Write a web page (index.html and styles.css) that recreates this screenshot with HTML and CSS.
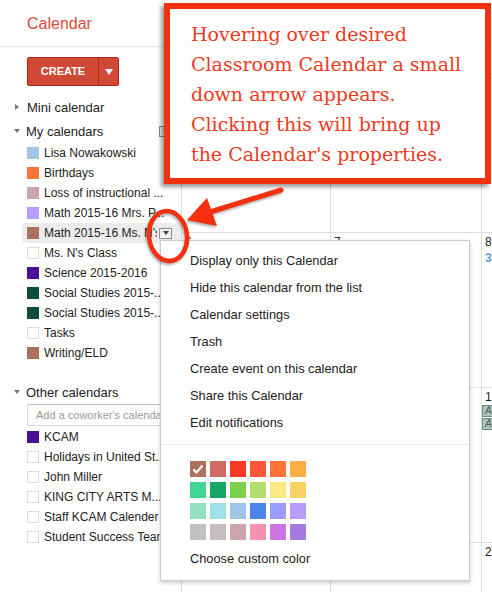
FILE: index.html
```html
<!DOCTYPE html>
<html>
<head>
  <meta charset="UTF-8">
  <title>Calendar</title>
  <link rel="stylesheet" href="styles.css">
</head>
<body>
    <div class="topbar"><span class="brand">Calendar</span></div>

    <div class="app">
        <div class="sidebar">
            <div class="create">
                <span class="create-main">CREATE</span>
                <span class="create-drop"><span class="tri-white"></span></span>
            </div>

            <div class="section"><span class="arrow-right"></span>Mini calendar</div>
            <div class="section"><span class="arrow-down"></span>My calendars<span class="menu-btn"></span></div>
            <ul class="cal-list">
                <li><span class="swatch c-blue"></span><span class="name">Lisa Nowakowski</span></li>
                <li><span class="swatch c-orange"></span><span class="name">Birthdays</span></li>
                <li><span class="swatch c-mauve"></span><span class="name">Loss of instructional ...</span></li>
                <li><span class="swatch c-lavender"></span><span class="name">Math 2015-16 Mrs. P...</span></li>
                <li class="hover"><span class="swatch c-brown"></span><span class="name">Math 2015-16 Ms. N's</span><span class="menu-btn"></span></li>
                <li><span class="swatch empty"></span><span class="name">Ms. N's Class</span></li>
                <li><span class="swatch c-purple"></span><span class="name">Science 2015-2016</span></li>
                <li><span class="swatch c-green"></span><span class="name">Social Studies 2015-...</span></li>
                <li><span class="swatch c-green"></span><span class="name">Social Studies 2015-...</span></li>
                <li><span class="swatch empty"></span><span class="name">Tasks</span></li>
                <li><span class="swatch c-brown"></span><span class="name">Writing/ELD</span></li>
            </ul>

            <div class="section other"><span class="arrow-down"></span>Other calendars</div>
            <input class="coworker" type="text" placeholder="Add a coworker's calendar">
            <ul class="cal-list other-list">
                <li><span class="swatch c-purple"></span><span class="name">KCAM</span></li>
                <li><span class="swatch empty"></span><span class="name">Holidays in United St...</span></li>
                <li><span class="swatch empty"></span><span class="name">John Miller</span></li>
                <li><span class="swatch empty"></span><span class="name">KING CITY ARTS M...</span></li>
                <li><span class="swatch empty"></span><span class="name">Staff KCAM Calender</span></li>
                <li><span class="swatch empty"></span><span class="name">Student Success Team</span></li>
            </ul>
        </div>

        <div class="main">
            <div class="dayhead"></div>
            <div class="week">
                <div class="cell"></div>
                <div class="cell"></div>
                <div class="cell"></div>
            </div>
            <div class="week">
                <div class="cell"><span class="num">6</span></div>
                <div class="cell"><span class="num">7</span></div>
                <div class="cell"><span class="num">8</span><span class="more">3</span></div>
            </div>
            <div class="week">
                <div class="cell"></div>
                <div class="cell"></div>
                <div class="cell"><span class="num">1</span>
                    <span class="chip">All day</span>
                    <span class="chip">All day</span>
                </div>
            </div>
            <div class="week">
                <div class="cell"></div>
                <div class="cell"></div>
                <div class="cell"><span class="num">2</span></div>
            </div>
        </div>
    </div>

    <!-- calendar dropdown menu -->
    <div class="popup">
        <div class="item">Display only this Calendar</div>
        <div class="item">Hide this calendar from the list</div>
        <div class="item">Calendar settings</div>
        <div class="item">Trash</div>
        <div class="item">Create event on this calendar</div>
        <div class="item">Share this Calendar</div>
        <div class="item">Edit notifications</div>
        <div class="sep"></div>
        <div class="palette">
            <span class="chosen" style="background:#ac725e">
                <svg width="16" height="16" viewBox="0 0 16 16"><path d="M3.5 8.5 L6.5 11.5 L12.5 4.5" fill="none" stroke="#fff" stroke-width="2.2"/></svg>
            </span>
            <span style="background:#d06b64"></span>
            <span style="background:#f83a22"></span>
            <span style="background:#fa573c"></span>
            <span style="background:#ff7537"></span>
            <span style="background:#ffad46"></span>
            <span style="background:#42d692"></span>
            <span style="background:#16a765"></span>
            <span style="background:#7bd148"></span>
            <span style="background:#b3dc6c"></span>
            <span style="background:#fbe983"></span>
            <span style="background:#fad165"></span>
            <span style="background:#92e1c0"></span>
            <span style="background:#9fe1e7"></span>
            <span style="background:#9fc6e7"></span>
            <span style="background:#4986e7"></span>
            <span style="background:#9a9cff"></span>
            <span style="background:#b99aff"></span>
            <span style="background:#c2c2c2"></span>
            <span style="background:#cabdbf"></span>
            <span style="background:#cca6ac"></span>
            <span style="background:#f691b2"></span>
            <span style="background:#cd74e6"></span>
            <span style="background:#a47ae2"></span>
        </div>
        <div class="item custom">Choose custom color</div>
    </div>

    <!-- annotation -->
    <div class="note">
        Hovering over desired<br>
        Classroom Calendar a small<br>
        down arrow appears.<br>
        Clicking this will bring up<br>
        the Calendar's properties.
    </div>
    <svg class="marks" width="492" height="592" viewBox="0 0 492 592">
        <ellipse cx="168" cy="236" rx="19" ry="25" transform="rotate(-8 168 236)" fill="none" stroke="#f4300f" stroke-width="4.5"/>
        <line x1="210" y1="212" x2="281" y2="190" stroke="#f4300f" stroke-width="5" stroke-linecap="round"/>
        <polygon points="187,220 207,198 217,226" fill="#f4300f"/>
    </svg>
</body>
</html>
```

FILE: styles.css
```css
* {
    box-sizing: border-box;
}

body {
    margin: 0;
    width: 492px;
    height: 592px;
    overflow: hidden;
    position: relative;
    font-family: "Liberation Sans", Arial, sans-serif;
    color: #222;
    background-color: #fff;
}

.topbar {
    height: 47px;
    border-bottom: 1px solid #e5e5e5;
    padding: 14px 0 0 27px;
}

.brand {
    color: #dd4b39;
    font-size: 16px;
    line-height: 20px;
}

.app {
    display: flex;
    height: 545px;
}

.sidebar {
    width: 181px;
    flex: none;
}

/* create button */
.create {
    display: flex;
    width: 92px;
    height: 29px;
    margin: 10px 0 0 27px;
    background-color: #d14836;
    border: 1px solid #b0281a;
    border-radius: 2px;
    color: #fff;
    font-size: 11px;
    font-weight: bold;
}

.create-main {
    width: 70px;
    line-height: 27px;
    text-align: center;
}

.create-drop {
    flex: 1;
    display: flex;
    align-items: center;
    justify-content: center;
    border-left: 1px solid #b0281a;
}

.tri-white {
    border-left: 4px solid transparent;
    border-right: 4px solid transparent;
    border-top: 6px solid #fff;
}

/* sections */
.section {
    display: flex;
    align-items: center;
    height: 24px;
    padding-left: 14px;
    font-size: 13px;
}

.create + .section {
    margin-top: 9px;
}

.section.other {
    margin-top: 17px;
}

.arrow-right {
    margin: 0 8px 0 1px;
    border-top: 3.5px solid transparent;
    border-bottom: 3.5px solid transparent;
    border-left: 4px solid #777;
}

.arrow-down {
    margin-right: 6px;
    border-left: 3.5px solid transparent;
    border-right: 3.5px solid transparent;
    border-top: 4px solid #777;
}

.menu-btn {
    display: flex;
    align-items: center;
    justify-content: center;
    flex: none;
    width: 13px;
    height: 11px;
    margin-left: auto;
    margin-right: 9px;
    border: 1px solid #8f8f8f;
    background-color: #f1f1f1;
}

.menu-btn::after {
    content: "";
    border-left: 3px solid transparent;
    border-right: 3px solid transparent;
    border-top: 4px solid #444;
}

/* calendar lists */
.cal-list {
    list-style: none;
    margin: 0 0 0 22px;
    padding: 0;
}

.cal-list li {
    display: flex;
    align-items: center;
    height: 20px;
    padding-left: 5px;
    font-size: 12px;
    white-space: nowrap;
    overflow: hidden;
}

.cal-list li.hover {
    background-color: #ececec;
}

.name {
    flex: 1;
    overflow: hidden;
}

.hover .name {
    margin-right: 2px;
}

.swatch {
    flex: none;
    width: 12px;
    height: 12px;
    margin-right: 5px;
}

.swatch.empty {
    border: 1px solid #dcdcdc;
    background-color: #fff;
}

.c-blue { background-color: #9fc6e7; }
.c-orange { background-color: #ff7537; }
.c-mauve { background-color: #cca6ac; }
.c-lavender { background-color: #b99aff; }
.c-brown { background-color: #ac725e; }
.c-purple { background-color: #4a1194; }
.c-green { background-color: #0f4c3d; }

.coworker {
    display: block;
    width: 145px;
    height: 22px;
    margin: 0 0 1px 27px;
    padding: 0 0 0 8px;
    border: 1px solid #d9d9d9;
    border-top-color: #c0c0c0;
    font-family: "Liberation Sans", Arial, sans-serif;
    font-size: 11px;
    color: #222;
}

.coworker::placeholder {
    color: #999;
}

/* month grid */
.main {
    flex: 1;
    border-left: 1px solid #ddd;
    overflow: hidden;
}

.dayhead,
.week {
    display: grid;
    grid-template-columns: 149px 151px 1fr;
}

.dayhead {
    height: 30px;
}

.week {
    height: 155px;
    border-top: 1px solid #ddd;
}

.cell {
    display: flex;
    flex-direction: column;
    align-items: flex-start;
    border-right: 1px solid #ddd;
    padding: 2px 0 0 3px;
    font-size: 12px;
    line-height: 14px;
}

.week .cell:last-child {
    border-right: 0;
}

.more {
    margin-top: 2px;
    color: #5ca0d3;
    font-weight: bold;
}

.chip {
    width: 100%;
    height: 12px;
    margin-top: 1px;
    margin-left: -3px;
    padding-left: 2px;
    background-color: #a9c6ba;
    border: 1px solid #6d8f82;
    color: #555;
    font-size: 10px;
    font-style: italic;
    line-height: 10px;
    overflow: hidden;
    white-space: nowrap;
}

/* dropdown menu */
.popup {
    position: absolute;
    left: 160px;
    top: 240px;
    width: 310px;
    height: 341px;
    padding: 6px 0;
    background-color: #fff;
    border: 1px solid rgba(0, 0, 0, 0.2);
    box-shadow: 0 2px 4px rgba(0, 0, 0, 0.2);
    z-index: 2;
}

.item {
    height: 27px;
    padding-left: 29px;
    font-size: 12.8px;
    line-height: 27px;
    color: #222;
}

.sep {
    height: 1px;
    margin: 8px 0 0;
    background-color: #ebebeb;
}

.palette {
    display: grid;
    grid-template-columns: repeat(6, 16px);
    grid-auto-rows: 16px;
    column-gap: 4px;
    row-gap: 5px;
    padding: 16px 0 0 29px;
}

.palette span {
    display: block;
}

.palette svg {
    display: block;
}

.item.custom {
    margin-top: 5px;
}

/* annotation layer */
.note {
    position: absolute;
    left: 164px;
    top: 3px;
    width: 327px;
    height: 181px;
    padding: 10px 0 0 21px;
    background-color: #fff;
    border: 6px solid #f4300f;
    box-shadow: -3px 3px 4px rgba(0, 0, 0, 0.4);
    color: #ee3a20;
    font-family: "DejaVu Serif", "Liberation Serif", serif;
    font-size: 19px;
    line-height: 30px;
    white-space: nowrap;
    z-index: 3;
}

.marks {
    position: absolute;
    left: 0;
    top: 0;
    pointer-events: none;
    z-index: 4;
    filter: drop-shadow(-1px 2px 1px rgba(0, 0, 0, 0.3));
}
```
